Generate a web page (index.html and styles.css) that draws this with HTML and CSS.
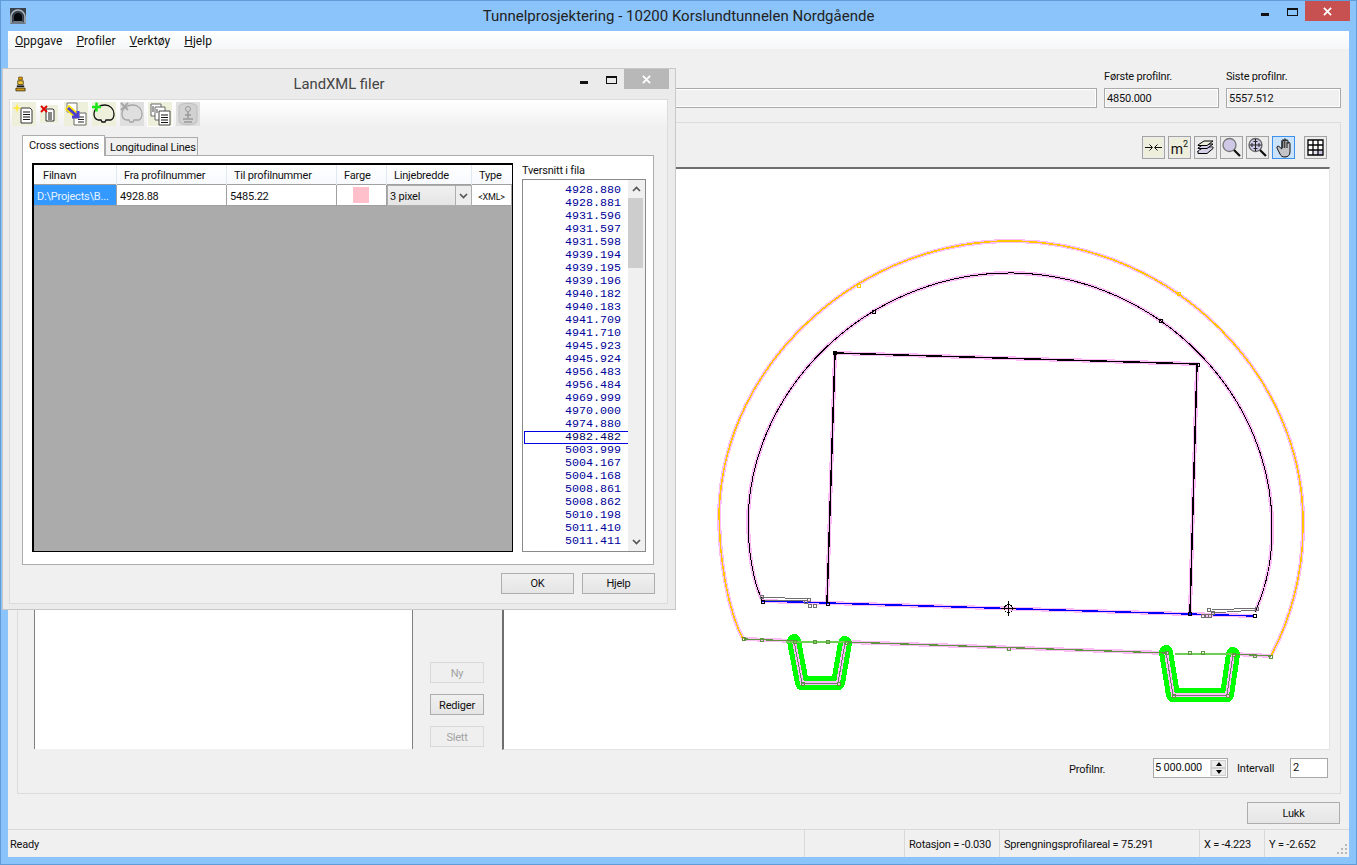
FILE: index.html
```html
<!DOCTYPE html>
<html lang="no">
<head>
<meta charset="utf-8">
<title>Tunnelprosjektering</title>
<link rel="stylesheet" href="styles.css">
</head>
<body>
<div class="window">
  <header class="titlebar">
    <div class="title-left">
      <svg class="app-icon" viewBox="0 0 16 16"><rect width="16" height="16" fill="#39424c"/><path d="M1 16V9a7 7 0 0 1 14 0v7" fill="none" stroke="#a9b4bf" stroke-width="1.6"/><path d="M4 16V9a4 4 0 0 1 8 0v7z" fill="#05080c"/><path d="M0 16l4-3h8l4 3z" fill="#6d7985"/></svg>
    </div>
    <div class="title-text">Tunnelprosjektering - 10200 Korslundtunnelen Nordgående</div>
    <div class="controls">
      <span class="ctl-min"></span><span class="ctl-max"></span><span class="ctl-close red"><svg viewBox="0 0 10 10"><path d="M1 1l8 8M9 1l-8 8"/></svg></span>
    </div>
  </header>

  <div class="client">
    <nav class="menubar">
      <span><u>O</u>ppgave</span><span><u>P</u>rofiler</span><span><u>V</u>erktøy</span><span><u>H</u>jelp</span>
    </nav>

    <div class="fields">
      <div class="field grow"><label>&nbsp;</label><div class="readonly"></div></div>
      <div class="field"><label>Første profilnr.</label><div class="readonly">4850.000</div></div>
      <div class="field"><label>Siste profilnr.</label><div class="readonly">5557.512</div></div>
    </div>

    <section class="group">
      <div class="left-col"><div class="list-pane"></div></div>
      <div class="btn-col">
        <button class="btn small" disabled>Ny</button>
        <button class="btn small">Rediger</button>
        <button class="btn small" disabled>Slett</button>
      </div>
      <div class="right-col">
        <div class="view-tools">
          <span class="tool"><svg viewBox="0 0 21 21"><rect x="1" y="1" width="19" height="19" fill="#eeeedd"/><path class="ink" d="M2 10.500h7M6.500 7.500l3 3-3 3M19 10.500h-7M14.500 7.500l-3 3 3 3"/></svg></span>
          <span class="tool m2"><span class="m2-bg">m<sup>2</sup></span></span>
          <span class="tool"><svg viewBox="0 0 21 21"><path d="M3 14l6-4h9l-6 5H3z" fill="#d5cfe8" stroke="#000"/><path d="M3 14v2.500h9l6-5V10" fill="#d5cfe8" stroke="#000"/><path d="M3 11l6-4h9l-6 4.500H3z" fill="#d5cfe8" stroke="#000"/><path d="M3 8l6-4h9l-6 4.500H3z" fill="#eeeedd" stroke="#000"/></svg></span>
          <span class="tool"><svg viewBox="0 0 21 21"><circle cx="8.500" cy="8" r="6.500" fill="#cfc8e6" stroke="#777" stroke-width="1.300"/><path d="M13 13l6 6" stroke="#111" stroke-width="2.200"/></svg></span>
          <span class="tool"><svg viewBox="0 0 21 21"><circle cx="8.500" cy="8" r="6.500" fill="#cfc8e6" stroke="#666" stroke-width="1.300"/><path d="M8.500 2v12M2.500 8h12M6.500 4.500h4M6.500 11.500h4M5 6v4M12 6v4" stroke="#222" fill="none"/><path d="M13 13l6 6" stroke="#111" stroke-width="2.200"/></svg></span>
          <span class="tool active"><svg viewBox="0 0 21 21"><path d="M4 11l3 6c1 2 2 3 5 3s5-2 5-5V6.500c0-1.500-2-1.500-2 0V4c0-1.500-2-1.500-2 0V3c0-1.500-2.200-1.500-2.200 0v1c0-1.500-2-1.500-2 0v8L6 9.500C5 8.500 3.500 9.500 4 11z" fill="#c4c4c8" stroke="#111"/><path d="M9.800 4v7M11.800 3v8M14 5v6" stroke="#111" fill="none"/></svg></span>
          <span class="tool last"><svg viewBox="0 0 21 21"><rect x="3" y="3" width="15" height="15" fill="#fff"/><rect x="13.500" y="13.500" width="4.500" height="4.500" fill="#c9c2e4"/><rect x="8.500" y="13.500" width="5" height="4.500" fill="#e3def2"/><path class="ink2" d="M3 3h15v15H3zM8 3v15M13 3v15M3 8h15M3 13h15"/></svg></span>
        </div>
        <div class="canvas">
          <svg class="drawing" viewBox="504 169 825 580" shape-rendering="crispEdges">
            <g class="halo">
              <path d="M743 639C728 610 719 560 719.100 511.300C723.600 361.400 862.300 236.400 1019.300 241.100C1176.200 245.800 1307.300 378.700 1302.900 528.700C1303 575 1290 620 1271 656"/>
              <path d="M762 600C753 580 748 550 748.100 517.200C752.100 381.300 876.100 268.900 1017.500 273.100C1158.900 277.300 1275.900 396.900 1271.900 532.800C1272 565 1265 590 1255 612"/>
              <path d="M827 603L835 353 1197 364 1190 613"/>
              <path d="M762 601L1254 616"/>
              <path d="M744 639L794 641M846 642L1166 653M1233 654L1271 656"/>
            </g>
            <g class="ditch">
              <path d="M794 641L802 683 838 683 845 643"/>
              <path d="M1166 652L1173 695 1227 695 1233 654"/>
            </g>
            <g class="ditch-in">
              <path d="M794 641L802 683 838 683 845 643"/>
              <path d="M1166 652L1173 695 1227 695 1233 654"/>
            </g>
            <g class="ditch-core">
              <path d="M794 641L802 683 838 683 845 643"/>
              <path d="M1166 652L1173 695 1227 695 1233 654"/>
            </g>
            <path class="ln-yellow" d="M743 639C728 610 719 560 719.100 511.300C723.600 361.400 862.300 236.400 1019.300 241.100C1176.200 245.800 1307.300 378.700 1302.900 528.700C1303 575 1290 620 1271 656"/>
            <path class="ln-black" d="M762 600C753 580 748 550 748.100 517.200C752.100 381.300 876.100 268.900 1017.500 273.100C1158.900 277.300 1275.900 396.900 1271.900 532.800C1272 565 1265 590 1255 612"/>
            <path class="ln-black thick" d="M827 603L835 353 1197 364 1190 613"/>
            <path class="ln-blue" d="M762 601L1254 616"/>
            <path class="ln-green" d="M744 639L794 641M846 642L1166 653M1233 654L1271 656"/>
            <path class="ln-lime" d="M786 642L848 642M1175 654L1233 654"/>
            <path class="ln-grey" d="M762 597L808 599M762 600L805 601M1212 610L1256 608M1212 613L1256 610"/>
            <g class="pt-green">
              <rect x="742" y="637" width="3" height="3"/><rect x="760" y="638" width="3" height="3"/><rect x="793" y="640" width="3" height="3"/><rect x="813" y="640" width="3" height="3"/><rect x="826" y="640" width="3" height="3"/><rect x="845" y="641" width="3" height="3"/><rect x="801" y="682" width="3" height="3"/><rect x="837" y="682" width="3" height="3"/><rect x="1007" y="647" width="3" height="3"/><rect x="1165" y="651" width="3" height="3"/><rect x="1188" y="651" width="3" height="3"/><rect x="1201" y="651" width="3" height="3"/><rect x="1232" y="653" width="3" height="3"/><rect x="1253" y="654" width="3" height="3"/><rect x="1269" y="655" width="3" height="3"/><rect x="1172" y="694" width="3" height="3"/><rect x="1226" y="694" width="3" height="3"/>
            </g>
            <g class="pt-grey">
              <rect x="807" y="598" width="3" height="3"/><rect x="804" y="600" width="3" height="3"/><rect x="808" y="604" width="3" height="3"/><rect x="813" y="604" width="3" height="3"/><rect x="760" y="595" width="3" height="3"/><rect x="1207" y="608" width="3" height="3"/><rect x="1211" y="611" width="3" height="3"/><rect x="1201" y="614" width="3" height="3"/><rect x="1205" y="614" width="3" height="3"/><rect x="1208" y="614" width="3" height="3"/><rect x="1255" y="607" width="3" height="3"/>
            </g>
            <g class="pt-black">
              <rect x="833" y="351" width="3" height="3"/><rect x="1196" y="363" width="3" height="3"/><rect x="826" y="602" width="3" height="3"/><rect x="1188" y="612" width="3" height="3"/><rect x="761" y="600" width="3" height="3"/><rect x="1253" y="614" width="3" height="3"/><rect x="872" y="310" width="3" height="3"/><rect x="1159" y="319" width="3" height="3"/>
            </g>
            <g class="pt-yellow">
              <rect x="857" y="284" width="3" height="3"/><rect x="1177" y="292" width="3" height="3"/>
            </g>
            <g class="cross">
              <circle cx="1008.500" cy="608.500" r="4"/><path d="M1008.500 601v15M1001 608.500h15"/>
            </g>
          </svg>
        </div>
        <div class="profile-row">
          <span class="lbl-prof">Profilnr.</span>
          <div class="spin">
            <span class="spin-val">5 000.000</span>
            <span class="spin-btns"><i class="up"></i><i class="down"></i></span>
          </div>
          <span class="lbl-int">Intervall</span>
          <div class="int-input">2</div>
        </div>
      </div>
    </section>

    <div class="close-row"><button class="btn lukk">Lukk</button></div>

    <footer class="statusbar">
      <span class="st-ready">Ready</span>
      <span class="st st-empty"></span>
      <span class="st st-rot">Rotasjon = -0.030</span>
      <span class="st st-area">Sprengningsprofilareal = 75.291</span>
      <span class="st st-x">X = -4.223</span>
      <span class="st st-y">Y = -2.652</span>
      <svg class="grip" viewBox="0 0 12 12"><path d="M9 1h2v2H9zM5 5h2v2H5zM9 5h2v2H9zM1 9h2v2H1zM5 9h2v2H5zM9 9h2v2H9z" fill="#b8b8b8"/></svg>
    </footer>
  </div>

  <div class="dialog">
    <header class="dlg-title">
      <div class="title-left">
        <svg class="dlg-icon" viewBox="0 0 12 17"><path d="M4 1h4v3H4z" fill="#e8a800" stroke="#5a3d00" stroke-width=".8"/><path d="M3 5h6v4H3z" fill="#f3c73a" stroke="#3b2b00" stroke-width=".8"/><path d="M2 10h8v2H2z" fill="#1c1c1c"/><path d="M1 13h10v3H1z" fill="#d39a14" stroke="#2c2000" stroke-width=".8"/></svg>
      </div>
      <div class="dlg-text">LandXML filer</div>
      <div class="controls dlg-controls">
        <span class="ctl-min"></span><span class="ctl-max"></span><span class="ctl-close grey"><svg viewBox="0 0 10 10"><path d="M1 1l8 8M9 1l-8 8"/></svg></span>
      </div>
    </header>
    <div class="dlg-client">
      <div class="dlg-toolbar">
        <svg class="tb" viewBox="0 0 24 24"><rect width="24" height="24" fill="#eef0dc"/><path d="M9 6h9l2 2v13H9z" fill="#fff" stroke="#333"/><path d="M11 10h7M11 12.500h7M11 15h7M11 17.500h7" stroke="#111" stroke-width="1.200"/><path d="M5 1l1 4 4 1-4 1-1 4-1-4-4-1 4-1z" fill="#ffe93b"/></svg>
        <svg class="tb tb-small" viewBox="0 0 18 18"><rect width="18" height="18" fill="#eef0dc"/><path d="M6 4h7l1 1v11H6z" fill="#fff" stroke="#333"/><path d="M8 8h4M8 10h4M8 12h4M8 14h4" stroke="#111"/><path d="M1 1l6 6M7 1L1 7" stroke="#e00000" stroke-width="1.800"/></svg>
        <svg class="tb tb-gap" viewBox="0 0 24 24"><rect width="24" height="24" fill="#eef0dc"/><path d="M3 1h10v9H3z" fill="#fff" stroke="#777"/><path d="M10 11h12v12H10z" fill="#fff" stroke="#666"/><path d="M14 15h6M14 17.500h6M14 20h6" stroke="#222" stroke-width="1.200"/><path d="M3 5l11 10" stroke="#ffe400" stroke-width="6"/><path d="M4 6l9 8M14 9v6H8" stroke="#4a3fd0" stroke-width="3" fill="none"/></svg>
        <svg class="tb" viewBox="0 0 24 24"><rect width="24" height="24" fill="#eef0dc"/><path d="M6 18c-3-1-4-3-4-6C2 6 8 3 13 3s9 4 9 9c0 3-1 5-3 6h-5l-1 2h-3l-1-2z" fill="none" stroke="#111" stroke-width="1.300"/><path d="M0 5h9M4.500 .500v9" stroke="#19e619" stroke-width="2.500"/></svg>
        <svg class="tb" viewBox="0 0 24 24"><rect width="24" height="24" fill="#dfdfdf"/><path d="M6 18c-3-1-4-3-4-6C2 6 8 3 13 3s9 4 9 9c0 3-1 5-3 6h-5l-1 2h-3l-1-2z" fill="none" stroke="#a5a5a5" stroke-width="1.300"/><path d="M1 1l7 7M8 1L1 8" stroke="#a5a5a5" stroke-width="1.800"/></svg>
        <span class="tb-frame"><svg class="tb" viewBox="0 0 24 24"><rect width="24" height="24" fill="#eef0dc"/><path d="M3 2h10v12H3z" fill="#fff" stroke="#666"/><path d="M7 5h10v13H7z" fill="#fff" stroke="#666"/><path d="M11 9h11v14H11z" fill="#fff" stroke="#444"/><path d="M13 13h7M13 15.500h7M13 18h7M13 20.500h7" stroke="#111" stroke-width="1.200"/><path d="M4 5h2M4 7h2M4 9h2M8 8h2M8 10h2" stroke="#444"/></svg></span>
        <svg class="tb" viewBox="0 0 24 24"><rect width="24" height="24" fill="#dfdfdf"/><path d="M3 5c0-5 18-5 18 0v14c0 5-18 5-18 0z" fill="#d2d2d2" stroke="#bdbdbd"/><circle cx="12" cy="7" r="2.500" fill="none" stroke="#999"/><path d="M12 10v6M7 17h10M8 20h8M9 13h6" stroke="#999" stroke-width="1.500"/></svg>
      </div>
      <div class="dlg-body">
        <div class="tabs">
          <span class="tab active-tab">Cross sections</span>
          <span class="tab">Longitudinal Lines</span>
        </div>
        <div class="tab-pane">
          <div class="grid-box">
            <div class="grid-head">
              <span>Filnavn</span><span>Fra profilnummer</span><span>Til profilnummer</span><span>Farge</span><span>Linjebredde</span><span>Type</span>
            </div>
            <div class="grid-row">
              <span class="cell sel">D:\Projects\B...</span>
              <span class="cell">4928.88</span>
              <span class="cell">5485.22</span>
              <span class="cell swatch-cell"><i class="swatch"></i></span>
              <span class="cell combo"><b>3 pixel</b><em><svg viewBox="0 0 9 6"><path d="M1 1l3.500 3.500L8 1"/></svg></em></span>
              <span class="cell type">&lt;XML&gt;</span>
            </div>
          </div>
          <div class="sections">
            <div class="sections-label">Tversnitt i fila</div>
            <div class="listbox">
              <div class="items">
                <div>4928.880</div><div>4928.881</div><div>4931.596</div><div>4931.597</div><div>4931.598</div><div>4939.194</div><div>4939.195</div><div>4939.196</div><div>4940.182</div><div>4940.183</div><div>4941.709</div><div>4941.710</div><div>4945.923</div><div>4945.924</div><div>4956.483</div><div>4956.484</div><div>4969.999</div><div>4970.000</div><div>4974.880</div><div class="picked">4982.482</div><div>5003.999</div><div>5004.167</div><div>5004.168</div><div>5008.861</div><div>5008.862</div><div>5010.198</div><div>5011.410</div><div>5011.411</div><div>5012.600</div>
              </div>
              <div class="scroll">
                <span class="arrow"><svg viewBox="0 0 9 6"><path d="M1 5l3.500-3.500L8 5"/></svg></span>
                <span class="thumb"></span>
                <span class="track"></span>
                <span class="arrow"><svg viewBox="0 0 9 6"><path d="M1 1l3.500 3.500L8 1"/></svg></span>
              </div>
            </div>
          </div>
        </div>
        <div class="dlg-buttons">
          <button class="btn dlg-btn">OK</button>
          <button class="btn dlg-btn">Hjelp</button>
        </div>
      </div>
    </div>
  </div>
</div>
</body>
</html>
```
FILE: styles.css
```css
* { box-sizing: border-box; }
html, body { margin: 0; padding: 0; }
body { width: 1357px; height: 865px; overflow: hidden; font-family: Roboto, "Liberation Sans", sans-serif; font-size: 11px; letter-spacing: -.2px; color: #111; }
button { font: inherit; letter-spacing: inherit; color: inherit; padding: 0; }

.window { position: relative; width: 1357px; height: 865px; background: #8ac4fa; border: 1px solid #5f9cd8; display: flex; flex-direction: column; }
.titlebar { height: 30px; display: grid; grid-template-columns: 1fr auto 1fr; align-items: center; flex: none; }
.title-left { display: flex; align-items: center; }
.app-icon { width: 16px; height: 16px; margin-left: 9px; }
.title-text { font-size: 15px; letter-spacing: 0; color: #222; padding-bottom: 1px; }
.controls { display: flex; justify-content: flex-end; align-items: flex-start; height: 100%; padding-right: 6px; }
.ctl-min { width: 8px; height: 3px; background: #111; margin: 12px 18px 0 0; }
.ctl-max { width: 11px; height: 8px; border: 1px solid #111; border-top-width: 2px; margin: 7px 7px 0 0; }
.ctl-close { width: 45px; height: 20px; display: flex; align-items: center; justify-content: center; }
.ctl-close svg { width: 9px; height: 9px; }
.ctl-close path { stroke: #fff; stroke-width: 2; fill: none; }
.red { background: #c75050; }
.grey { background: #b8b8b8; }

.client { flex: 1; margin: 0 7px 7px; background: #f0f0f0; display: flex; flex-direction: column; min-height: 0; }
.menubar { height: 18px; flex: none; padding: 2px 0 0 7px; display: flex; gap: 14px; align-items: center; background: linear-gradient(#fff, #f5f6f7); font-size: 12px; letter-spacing: .05px; color: #111; }
.menubar span { white-space: nowrap; }

.fields { height: 73px; flex: none; display: flex; gap: 7px; padding: 20px 8px 0 42px; }
.field { width: 115px; }
.field.grow { flex: 1; }
.field label { display: block; height: 19px; line-height: 16px; }
.readonly { height: 20px; line-height: 20px; padding-left: 2px; border: 1px solid #a9a9a9; box-shadow: inset 0 0 0 1px #fff; background: #f0f0f0; }

.group { height: 672px; flex: none; margin: 0 8px 0 9px; border: 1px solid #dcdcdc; padding: 13px 0 0 16px; display: flex; }
.left-col { width: 379px; padding-top: 31px; }
.list-pane { height: 582px; background: #fff; border-left: 1px solid #808080; border-right: 1px solid #808080; }
.btn-col { width: 54px; margin-left: 17px; height: 611px; display: flex; flex-direction: column; justify-content: flex-end; gap: 11px; }
.right-col { width: 828px; margin-left: 18px; }

.btn { background: linear-gradient(#f0f0f0, #e5e5e5); border: 1px solid #adadad; display: block; }
.btn:disabled { background: #efefef; border-color: #d9d9d9; color: #a3a3a3; }
.small { width: 54px; height: 21px; padding-top: 1px; }
.lukk { width: 93px; height: 22px; }
.dlg-btn { width: 73px; height: 21px; }

.view-tools { height: 23px; display: flex; justify-content: flex-end; padding-right: 3px; gap: 3px; }
.tool { width: 23px; height: 23px; border: 1px solid #a3a3a3; background: #ececec; flex: none; }
.tool svg { display: block; width: 21px; height: 21px; }
.tool.active { background: #cce4fb; border-color: #3d92ee; }
.tool.last { margin-left: 6px; }
.ink { stroke: #111; fill: none; }
.ink2 { stroke: #000; fill: none; stroke-width: 1.300; }
.m2-bg { display: block; margin: 1px; height: 19px; background: #eeeedd; font-size: 14px; letter-spacing: 0; line-height: 23px; text-align: center; color: #111; white-space: nowrap; overflow: hidden; }
.m2-bg sup { font-size: 9px; line-height: 0; vertical-align: 7px; }

.canvas { margin-top: 8px; height: 583px; background: #fff; border-top: 2px solid #6f6f6f; border-left: 2px solid #6f6f6f; border-right: 1px solid #e3e3e3; border-bottom: 1px solid #e3e3e3; }
.drawing { display: block; width: 825px; height: 580px; }
.drawing path, .drawing rect, .drawing circle { fill: none; }
.halo path { stroke: #fcbdf7; stroke-width: 4; }
.ditch path { stroke: #00ff00; stroke-width: 14; stroke-linejoin: round; stroke-linecap: round; }
.ditch-in path { stroke: #fcbdf7; stroke-width: 4; }
.ditch-core path { stroke: #777; stroke-width: 1; }
.ln-yellow { stroke: #ffc800; stroke-width: 1.500; }
.ln-black { stroke: #000; stroke-width: 1; }
.ln-black.thick { stroke-width: 1.500; }
.ln-blue { stroke: #0000ff; stroke-width: 1.500; }
.ln-green { stroke: #5f9440; stroke-width: 1.300; }
.ln-lime { stroke: #6fcc55; stroke-width: 1.200; }
.ln-grey { stroke: #6e6e6e; stroke-width: 1; }
.pt-green rect { stroke: #5f9440; }
.pt-grey rect { stroke: #6e6e6e; }
.pt-black rect { stroke: #000; }
.pt-yellow rect { stroke: #ffc800; }
.cross circle, .cross path { stroke: #000; stroke-width: 1; }

.profile-row { margin-top: 8px; height: 20px; display: flex; align-items: center; padding-right: 2px; justify-content: flex-end; }
.lbl-prof { width: 84px; padding-top: 2px; }
.spin { width: 75px; height: 20px; border: 1px solid #a9a9a9; background: #fff; display: flex; justify-content: space-between; }
.spin-val { padding-left: 1px; line-height: 17px; }
.spin-btns { width: 16px; display: flex; flex-direction: column; border-left: 1px solid #ddd; margin: 1px 1px 1px 0; }
.spin-btns i { flex: 1; background: #ececec; border: 1px solid #cfcfcf; display: flex; align-items: center; justify-content: center; }
.up::before { content: ""; border: 3px solid transparent; border-top: 0; border-bottom: 4px solid #000; }
.down::before { content: ""; border: 3px solid transparent; border-bottom: 0; border-top: 4px solid #000; }
.lbl-int { width: 53px; margin-left: 9px; }
.int-input { width: 38px; height: 20px; border: 1px solid #a9a9a9; background: #fff; padding-left: 2px; line-height: 18px; }

.close-row { flex: none; display: flex; justify-content: flex-end; padding: 8px 9px 0 0; height: 35px; }

.statusbar { flex: 1; display: flex; align-items: center; border-top: 1px solid #d9d9d9; position: relative; white-space: nowrap; }
.st-ready { flex: 1; padding: 1px 0 0 2px; }
.st { height: 100%; display: flex; align-items: center; border-left: 1px solid #d9d9d9; padding: 1px 0 0 4px; flex: none; }
.st-empty { width: 100px; }
.st-rot { width: 95px; }
.st-area { width: 200px; }
.st-x { width: 65px; }
.st-y { width: 85px; }
.grip { position: absolute; right: 1px; bottom: 2px; width: 12px; height: 12px; }

/* dialog: a window floating over the main window */
.dialog { position: absolute; left: 1px; top: 67px; width: 674px; height: 542px; background: #ebebeb; border: 1px solid #c8c8c8; display: flex; flex-direction: column; padding: 0 7px 5px 6px; }
.dlg-title { height: 30px; flex: none; margin: 0 -7px 0 -6px; display: grid; grid-template-columns: 1fr auto 1fr; align-items: center; }
.dlg-icon { width: 11px; height: 16px; margin-left: 12px; }
.dlg-text { font-size: 14.800px; letter-spacing: 0; color: #444; padding-bottom: 1px; }
.dlg-controls { padding-right: 6px; }
.dlg-client { flex: 1; min-height: 0; background: #f0f0f0; border: 1px solid #dcdcdc; display: flex; flex-direction: column; }
.dlg-toolbar { height: 28px; flex: none; background: linear-gradient(#fff, #f0f0f0); display: flex; align-items: center; padding-left: 2px; gap: 4px; }
.tb { width: 24px; height: 24px; display: block; flex: none; }
.tb-small { width: 18px; height: 18px; }
.tb-gap { margin-left: 2px; }
.tb-frame { display: block; outline: 1px solid #fff; flex: none; }

.dlg-body { flex: 1; min-height: 0; padding: 7px 12px 0 12px; display: flex; flex-direction: column; }
.tabs { height: 20px; display: flex; align-items: flex-end; flex: none; position: relative; z-index: 1; }
.tab { height: 18px; padding: 0 0 0 4px; line-height: 20px; border: 1px solid #acacac; border-bottom: 0; background: #f0f0f0; white-space: nowrap; width: 93px; }
.tab.active-tab { height: 21px; width: 83px; line-height: 20px; background: #fff; margin-bottom: -1px; padding: 0 0 0 6px; }
.tab-pane { height: 410px; width: 632px; flex: none; background: #fff; border: 1px solid #acacac; padding: 7px 0 0 9px; display: flex; }
.grid-box { width: 481px; height: 389px; background: #ababab; border: solid #000; border-width: 2px 1px 1px 2px; }
.grid-head, .grid-row { display: grid; grid-template-columns: 83px 110px 110px 50px 85px 39px; }
.grid-head { height: 20px; background: linear-gradient(#fff, #f7f9fc); border-bottom: 1px solid #a0a0a0; line-height: 21px; }
.grid-head span { padding-left: 7px; border-right: 1px solid #e0e8f4; white-space: nowrap; }
.grid-head span:first-child { padding-left: 9px; }
.grid-head span:last-child { border-right: 0; }
.grid-row { height: 21px; }
.cell { background: #fff; border-right: 1px solid #a0a0a0; border-bottom: 1px solid #a0a0a0; padding: 2px 0 0 3px; line-height: 20px; white-space: nowrap; overflow: hidden; }
.cell.sel { background: #3399ff; color: #e6f2ff; }
.swatch-cell { padding: 2px 0 0 16px; }
.swatch { display: block; width: 16px; height: 16px; background: #ffc0cb; }
.combo { display: flex; padding: 0; background: linear-gradient(#f0f0f0, #e5e5e5); border: 1px solid #adadad; }
.combo b { flex: 1; font-weight: 400; padding-left: 2px; line-height: 21px; }
.combo em { width: 16px; border-left: 1px solid #adadad; display: flex; align-items: center; justify-content: center; background: #ededed; }
.combo svg { width: 9px; height: 6px; }
.combo path, .arrow path { fill: none; stroke: #555; stroke-width: 1.700; }
.type { font-size: 9px; text-align: center; padding: 2px 0 0; border-right: 0; }

.sections { width: 124px; margin-left: 9px; }
.sections-label { height: 16px; line-height: 15px; white-space: nowrap; }
.listbox { height: 373px; border: 1px solid #8a8a8a; display: flex; background: #fff; }
.items { width: 105px; height: 370px; overflow: hidden; padding: 4px 0 0 1px; font-family: "Liberation Mono", monospace; font-size: 11.67px; letter-spacing: 0; color: #000099; line-height: 13px; text-align: right; flex: none; }
.items div { height: 13px; padding-right: 7px; }
.items .picked { border: 1px solid #0000e0; border-right: 0; color: #000060; line-height: 11px; }
.scroll { width: 17px; flex: none; background: #f0f0f0; display: flex; flex-direction: column; }
.arrow { height: 18px; display: flex; align-items: center; justify-content: center; flex: none; }
.arrow svg { width: 9px; height: 6px; }
.thumb { height: 70px; width: 15px; background: #cdcdcd; flex: none; }
.track { flex: 1; }
.dlg-buttons { display: flex; justify-content: flex-end; gap: 8px; padding-top: 8px; }
```
